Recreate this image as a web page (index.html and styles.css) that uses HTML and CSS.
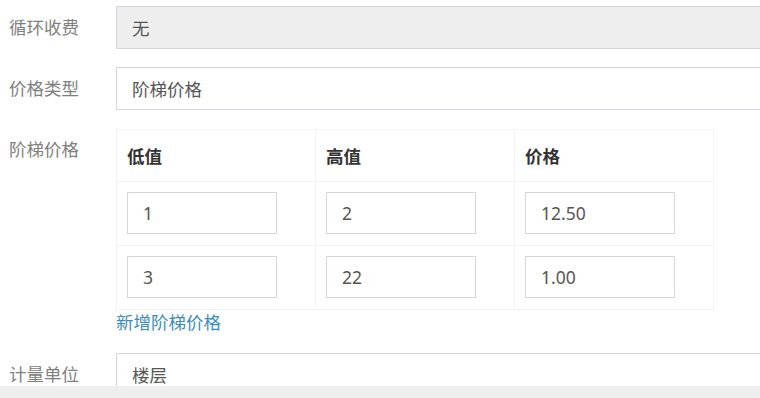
FILE: index.html
```html
<!DOCTYPE html>
<html lang="zh-CN">

<head>
    <meta charset="UTF-8">
    <meta name="viewport" content="width=device-width, initial-scale=1.0">
    <title>阶梯价格</title>
    <link rel="stylesheet" href="styles.css">
</head>

<body>
    <form action="#" class="form">
        <div class="form-row">
            <label class="form-label">循环收费</label>
            <input type="text" class="form-input" value="无" disabled>
        </div>
        <div class="form-row">
            <label class="form-label">价格类型</label>
            <input type="text" class="form-input" value="阶梯价格">
        </div>
        <div class="form-row">
            <label class="form-label">阶梯价格</label>
            <div class="tier">
                <table class="tier-table">
                    <thead>
                        <tr>
                            <th>低值</th>
                            <th>高值</th>
                            <th>价格</th>
                        </tr>
                    </thead>
                    <tbody>
                        <tr>
                            <td><input type="text" class="cell-input" value="1"></td>
                            <td><input type="text" class="cell-input" value="2"></td>
                            <td><input type="text" class="cell-input" value="12.50"></td>
                        </tr>
                        <tr>
                            <td><input type="text" class="cell-input" value="3"></td>
                            <td><input type="text" class="cell-input" value="22"></td>
                            <td><input type="text" class="cell-input" value="1.00"></td>
                        </tr>
                    </tbody>
                </table>
                <a href="#" class="add-tier">新增阶梯价格</a>
            </div>
        </div>
        <div class="form-row">
            <label class="form-label">计量单位</label>
            <input type="text" class="form-input" value="楼层">
        </div>
    </form>
    <div class="scroll-track"></div>
</body>

</html>
```

FILE: styles.css
```css
* {
    margin: 0;
    padding: 0;
    box-sizing: border-box;
}

html,
body {
    overflow: hidden;
    background: #fff;
}

body {
    font-family: "Noto Sans", "Noto Sans CJK SC", sans-serif;
    font-size: 17.5px;
    color: #555;
}

.form {
    padding-top: 6px;
}

.form-row {
    display: flex;
    align-items: flex-start;
    margin-bottom: 18px;
}

.form-label {
    width: 116px;
    flex-shrink: 0;
    padding-left: 9px;
    line-height: 43px;
    color: #808080;
}

.form-input {
    width: 700px;
    flex-shrink: 0;
    height: 43px;
    padding: 0 15px;
    border: 1px solid #d2d6de;
    background: #fff;
    font-family: inherit;
    font-size: 17.5px;
    color: #555;
    outline: none;
}

.form-input:disabled {
    background: #eee;
    color: #555;
}

.tier {
    padding-top: 1px;
}

.tier-table {
    width: 598px;
    border-collapse: collapse;
    table-layout: fixed;
}

.tier-table th,
.tier-table td {
    border: 1px solid #f4f4f4;
    text-align: left;
}

.tier-table th {
    height: 52px;
    padding: 0 10px;
    font-weight: bold;
    color: #333;
}

.tier-table td {
    padding: 10px 10px 11px;
}

.cell-input {
    display: block;
    width: 150px;
    height: 42px;
    padding: 0 15px;
    border: 1px solid #d2d6de;
    font-family: inherit;
    font-size: 17.5px;
    color: #555;
    outline: none;
}

.add-tier {
    display: block;
    line-height: 25px;
    color: #3c8dbc;
    text-decoration: none;
}

.scroll-track {
    position: fixed;
    left: 0;
    right: 0;
    bottom: 0;
    height: 12px;
    background: #eee;
}
```
